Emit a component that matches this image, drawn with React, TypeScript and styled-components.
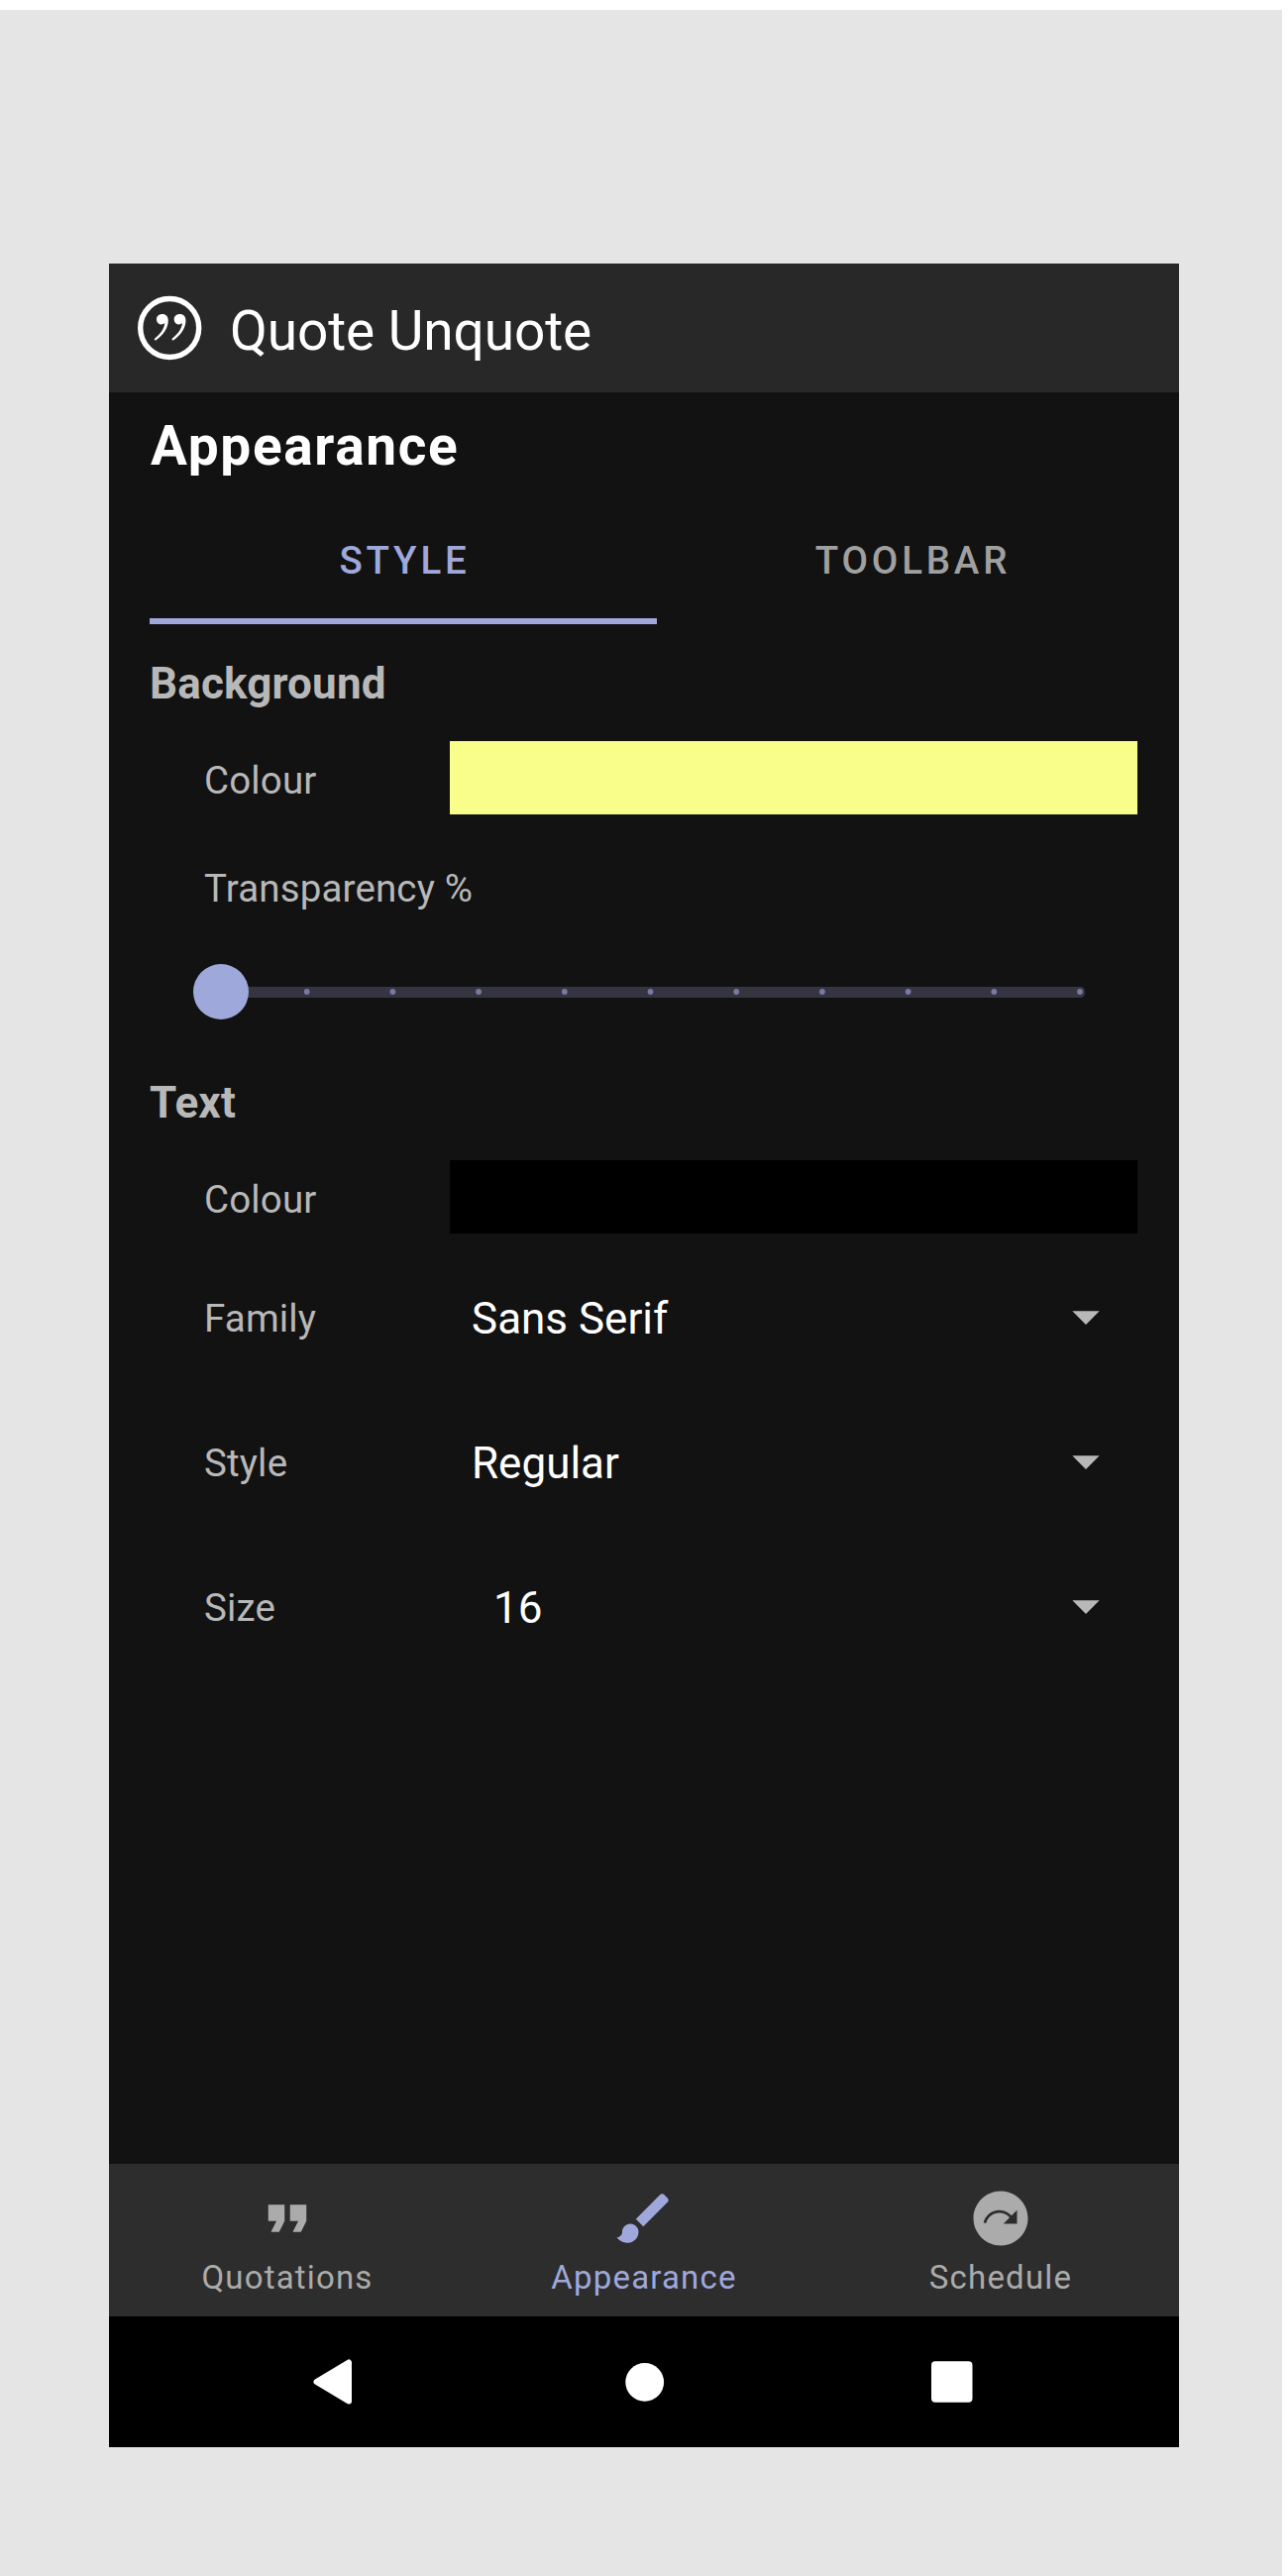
import React from 'react';
import styled, { createGlobalStyle } from 'styled-components';
import { MdNextPlan } from 'react-icons/md';

const ACCENT = '#9fa8da';

const GlobalStyle = createGlobalStyle`
  * { box-sizing: border-box; }
  body {
    margin: 0;
    background: #ffffff;
    font-family: Roboto, "Liberation Sans", sans-serif;
  }
`;

const Page = styled.div`
  height: 2600px;
  padding: 10px 6px 0 0;
  background: #ffffff;
`;

const Backdrop = styled.div`
  height: 2590px;
  padding: 256px 104px 0 110px;
  background: #e5e5e5;
`;

const Phone = styled.div`
  display: flex;
  flex-direction: column;
  width: 1080px;
  height: 2204px;
  background: #121212;
`;

const AppBar = styled.header`
  display: flex;
  align-items: center;
  gap: 28px;
  height: 130px;
  padding-left: 28px;
  background: #282828;
`;

const AppTitle = styled.span`
  padding-top: 5px;
  color: #ffffff;
  font-size: 55px;
  line-height: 64px;
  letter-spacing: -0.1px;
  white-space: nowrap;
`;

const Content = styled.main`
  flex: 1;
  padding: 0 42px 0 41px;
`;

const Heading = styled.h1`
  height: 106px;
  margin: 0;
  padding-left: 1px;
  color: #ffffff;
  font-size: 55px;
  font-weight: 700;
  line-height: 108px;
  letter-spacing: 1.65px;
`;

const Tabs = styled.div`
  display: grid;
  grid-template-columns: 512px 512px;
  width: 997px;
`;

const Tab = styled.div<{ $active?: boolean }>`
  height: 128px;
  padding-left: ${(p) => (p.$active ? 3 : 5)}px;
  text-align: center;
  color: ${(p) => (p.$active ? ACCENT : '#a0a0a0')};
  box-shadow: ${(p) => (p.$active ? `inset 0 -6px 0 ${ACCENT}` : 'none')};
  font-size: 38.5px;
  font-weight: 500;
  line-height: 128px;
  letter-spacing: 3.8px;
`;

const SectionTitle = styled.h2<{ $height: number; $line: number }>`
  height: ${(p) => p.$height}px;
  margin: 0;
  color: #b8b8b8;
  font-size: 44px;
  font-weight: 700;
  line-height: ${(p) => p.$line}px;
  letter-spacing: 0.15px;
`;

const Row = styled.div<{ $height: number }>`
  display: grid;
  grid-template-columns: 248px 1fr;
  align-items: center;
  height: ${(p) => p.$height}px;
  padding-left: 55px;
`;

const Label = styled.span<{ $drop?: number }>`
  padding-top: ${(p) => p.$drop ?? 0}px;
  color: #b8b8b8;
  font-size: 38.5px;
  line-height: 46px;
  letter-spacing: 0.15px;
  white-space: nowrap;
`;

const Swatch = styled.div<{ $color: string }>`
  height: 74px;
  background: ${(p) => p.$color};
`;

const SliderBox = styled.div`
  display: flex;
  height: 58px;
  padding-left: 41px;
`;

const Selects = styled.div`
  padding-top: 13px;
`;

const Select = styled.div<{ $indent: number }>`
  display: flex;
  align-items: center;
  justify-content: space-between;
  padding: 0 38px 0 ${(p) => p.$indent}px;
  color: #ffffff;
  font-size: 44px;
  line-height: 52px;
`;

const BottomNav = styled.nav`
  display: grid;
  grid-template-columns: repeat(3, 1fr);
  height: 154px;
  background: #2d2d2d;
`;

const NavItem = styled.div<{ $active?: boolean }>`
  display: flex;
  flex-direction: column;
  align-items: center;
  padding-top: 22px;
  color: ${(p) => (p.$active ? ACCENT : '#ababab')};
  font-size: 33px;
  line-height: 40px;
  letter-spacing: 1.18px;
`;

const NavLabel = styled.span`
  margin-top: 7px;
`;

const SystemBar = styled.div`
  display: flex;
  align-items: center;
  height: 132px;
  padding-left: 206px;
  background: #000000;
`;

const CircleIcon = styled.svg`
  margin: 0 269px 0 275px;
`;

function Logo() {
  const mark =
    'M20 24.2C20 21.1 22.5 19 25.8 19C29.6 19 31.8 21.5 31.8 25.6C31.8 33.2 26.8 40.4 19.6 45.3C18.3 46.1 17.1 44.6 18.3 43.6C24 38.9 27.4 34.4 28.3 28.3C24.4 31 20 28.6 20 24.2Z';
  return (
    <svg width="66" height="66" viewBox="0 0 66 66">
      <circle cx="33.2" cy="33" r="29.5" fill="none" stroke="#fff" strokeWidth="5.4" />
      <path d={mark} fill="#fff" />
      <path d={mark} fill="#fff" transform="translate(17.7 0)" />
    </svg>
  );
}

function Slider() {
  const ticks = Array.from({ length: 10 }, (_, i) => 31 + 86.7 * (i + 1));
  return (
    <svg width="910" height="58" viewBox="0 0 910 58">
      <rect x="26" y="24" width="877" height="11" rx="4.5" fill="#343540" />
      {ticks.map((x) => (
        <circle key={x} cx={x} cy="29" r="2.9" fill="#757ba0" />
      ))}
      <circle cx="31" cy="29" r="28" fill={ACCENT} />
    </svg>
  );
}

function Caret() {
  return (
    <svg width="28" height="16" viewBox="0 0 28 16">
      <path d="M0.3 0.3H27.7L14 14Z" fill="#b8b8b8" />
    </svg>
  );
}

const settings = [
  { label: 'Family', value: 'Sans Serif', indent: 22 },
  { label: 'Style', value: 'Regular', indent: 22 },
  { label: 'Size', value: '16', indent: 44 },
];

export default function App() {
  return (
    <Page>
      <GlobalStyle />
      <Backdrop>
        <Phone>
          <AppBar>
            <Logo />
            <AppTitle>Quote Unquote</AppTitle>
          </AppBar>
          <Content>
            <Heading>Appearance</Heading>
            <Tabs>
              <Tab $active>STYLE</Tab>
              <Tab>TOOLBAR</Tab>
            </Tabs>
            <SectionTitle $height={118} $line={120}>Background</SectionTitle>
            <Row $height={74}>
              <Label $drop={6}>Colour</Label>
              <Swatch $color="#f9fd89" />
            </Row>
            <Row $height={150}>
              <Label>Transparency %</Label>
            </Row>
            <SliderBox>
              <Slider />
            </SliderBox>
            <SectionTitle $height={141} $line={166}>Text</SectionTitle>
            <Row $height={74}>
              <Label $drop={6}>Colour</Label>
              <Swatch $color="#000000" />
            </Row>
            <Selects>
              {settings.map((s) => (
                <Row key={s.label} $height={146}>
                  <Label>{s.label}</Label>
                  <Select $indent={s.indent}>
                    <span>{s.value}</span>
                    <Caret />
                  </Select>
                </Row>
              ))}
            </Selects>
          </Content>
          <BottomNav>
            <NavItem>
              <svg width="66" height="66" viewBox="0 0 24 24" fill="currentColor">
                <path d="M6 17h3l2-4V7H5v6h3zm8 0h3l2-4V7h-6v6h3z" />
              </svg>
              <NavLabel>Quotations</NavLabel>
            </NavItem>
            <NavItem $active>
              <svg width="66" height="66" viewBox="0 0 24 24" fill="currentColor">
                <path d="M7 14c-1.66 0-3 1.34-3 3 0 1.31-1.16 2-2 2 .92 1.22 2.49 2 4 2 2.21 0 4-1.79 4-4 0-1.66-1.34-3-3-3zm13.71-9.37l-1.34-1.34c-.39-.39-1.02-.39-1.41 0L9 12.25 11.75 15l8.96-8.96c.39-.39.39-1.02 0-1.41z" />
              </svg>
              <NavLabel>Appearance</NavLabel>
            </NavItem>
            <NavItem>
              <MdNextPlan size={66} />
              <NavLabel>Schedule</NavLabel>
            </NavItem>
          </BottomNav>
          <SystemBar>
            <svg width="40" height="46" viewBox="0 0 40 46">
              <path d="M3.5 23L36 3.5V42.5Z" fill="#fff" stroke="#fff" strokeWidth="6" strokeLinejoin="round" />
            </svg>
            <CircleIcon width="40" height="40" viewBox="0 0 40 40">
              <circle cx="19.7" cy="20.4" r="19.4" fill="#fff" />
            </CircleIcon>
            <svg width="42" height="42" viewBox="0 0 42 42">
              <rect x="0" y="0.3" width="41.5" height="41.5" rx="4" fill="#fff" />
            </svg>
          </SystemBar>
        </Phone>
      </Backdrop>
    </Page>
  );
}
